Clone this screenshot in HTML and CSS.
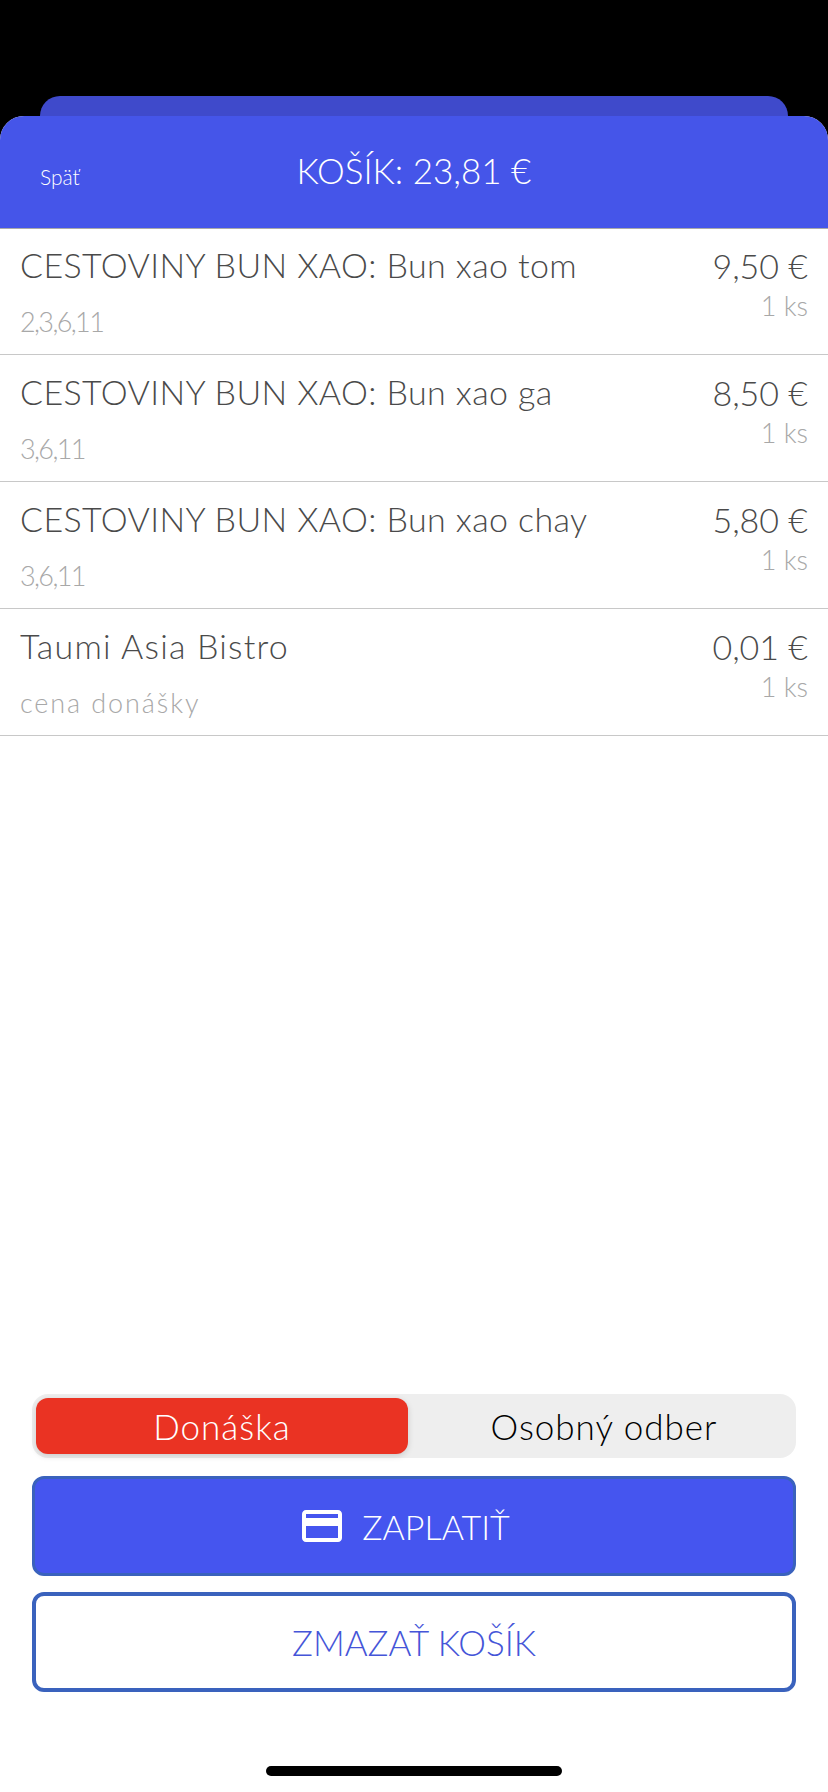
FILE: index.html
```html
<!DOCTYPE html>
<html lang="sk">
<head>
    <meta charset="UTF-8">
    <meta name="viewport" content="width=device-width, initial-scale=1.0">
    <title>Košík</title>
    <link rel="stylesheet" href="styles.css">
</head>
<body>
    <div class="back-sheet"></div>
    <div class="sheet">
        <header class="top">
            <a class="back">Späť</a>
            <h1>KOŠÍK: 23,81 €</h1>
        </header>

        <ul class="items">
            <li class="item">
                <div class="item-main">
                    <div class="item-name">CESTOVINY BUN XAO: Bun xao tom</div>
                    <div class="item-note codes">2,3,6,11</div>
                </div>
                <div class="item-side">
                    <div class="item-price">9,50 €</div>
                    <div class="item-qty">1 ks</div>
                </div>
            </li>
            <li class="item">
                <div class="item-main">
                    <div class="item-name">CESTOVINY BUN XAO: Bun xao ga</div>
                    <div class="item-note codes">3,6,11</div>
                </div>
                <div class="item-side">
                    <div class="item-price">8,50 €</div>
                    <div class="item-qty">1 ks</div>
                </div>
            </li>
            <li class="item">
                <div class="item-main">
                    <div class="item-name">CESTOVINY BUN XAO: Bun xao chay</div>
                    <div class="item-note codes">3,6,11</div>
                </div>
                <div class="item-side">
                    <div class="item-price">5,80 €</div>
                    <div class="item-qty">1 ks</div>
                </div>
            </li>
            <li class="item">
                <div class="item-main">
                    <div class="item-name wide">Taumi Asia Bistro</div>
                    <div class="item-note words">cena donášky</div>
                </div>
                <div class="item-side">
                    <div class="item-price">0,01 €</div>
                    <div class="item-qty">1 ks</div>
                </div>
            </li>
        </ul>

        <div class="actions">
            <div class="switch">
                <div class="switch-opt active">Donáška</div>
                <div class="switch-opt">Osobný odber</div>
            </div>
            <button class="btn btn-pay">
                <svg class="card-icon" width="40" height="32" viewBox="2 4 20 16">
                    <path fill="#fff" d="M20 4H4c-1.11 0-1.99.89-1.99 2L2 18c0 1.11.89 2 2 2h16c1.11 0 2-.89 2-2V6c0-1.11-.89-2-2-2zm0 14H4v-6h16v6zm0-10H4V6h16v2z"/>
                </svg>
                ZAPLATIŤ
            </button>
            <button class="btn btn-clear">ZMAZAŤ KOŠÍK</button>
        </div>

        <div class="home-bar"></div>
    </div>
</body>
</html>
```

FILE: styles.css
```css
* {
    box-sizing: border-box;
}
body {
    margin: 0;
    height: 1792px;
    background: #000;
    font-family: Lato, "Noto Sans", sans-serif;
    font-weight: 300;
    overflow: hidden;
}
.back-sheet {
    height: 20px;
    margin: 96px 40px 0;
    background: #3f4acb;
    border-radius: 20px 20px 0 0;
}
.sheet {
    height: 1676px;
    display: flex;
    flex-direction: column;
    background: #fff;
    border-radius: 24px 24px 0 0;
}
.top {
    position: relative;
    height: 113px;
    flex: none;
    background: #4555e9;
    border-radius: 24px 24px 0 0;
    border-bottom: 1px solid #a9a9a9;
    color: #fff;
    text-align: center;
}
.top h1 {
    margin: 0;
    padding-top: 32px;
    font-size: 35px;
    font-weight: 300;
    line-height: 45px;
}
.back {
    position: absolute;
    left: 40px;
    top: 48px;
    font-size: 21px;
    line-height: 26px;
}
.items {
    list-style: none;
    margin: 0;
    padding: 0;
}
.item {
    display: flex;
    justify-content: space-between;
    height: 127px;
    padding: 15px 20px 0;
    border-bottom: 1px solid #c8c8c8;
}
.item:first-child {
    height: 126px;
    padding-top: 14px;
}
.item-name,
.item-price {
    font-size: 34px;
    line-height: 44px;
    color: #4a4a4a;
}
.item-name {
    letter-spacing: 0.4px;
}
.item-name.wide {
    letter-spacing: 1.2px;
}
.item-note {
    margin-top: 18px;
    font-size: 27px;
    line-height: 34px;
    color: #a8a8a8;
}
.item-note.codes {
    letter-spacing: -1.6px;
}
.item-note.words {
    letter-spacing: 1.9px;
}
.item-side {
    padding-top: 1px;
    text-align: right;
}
.item-qty {
    margin-top: 1px;
    font-size: 27px;
    line-height: 34px;
    color: #a8a8a8;
}
.actions {
    display: flex;
    flex-direction: column;
    margin-top: auto;
    padding: 0 32px;
}
.switch {
    display: flex;
    height: 64px;
    padding: 4px;
    background: #eee;
    border-radius: 16px;
}
.switch-opt {
    flex: 1;
    padding-left: 8px;
    font-size: 35px;
    letter-spacing: 1px;
    line-height: 56px;
    text-align: center;
    color: #000;
}
.switch-opt.active {
    flex: none;
    width: 372px;
    padding-left: 0;
    background: #ea3323;
    border-radius: 12px;
    color: #fff;
    box-shadow: 0 2px 6px rgba(0,0,0,0.15);
}
.btn {
    display: flex;
    align-items: center;
    justify-content: center;
    height: 100px;
    border-radius: 12px;
    font-family: inherit;
    font-weight: 300;
    font-size: 35px;
}
.btn-pay {
    margin-top: 18px;
    padding-right: 22px;
    background: #4555ef;
    border: 3px solid #3a62bd;
    color: #fff;
    font-size: 34px;
}
.card-icon {
    margin-right: 20px;
}
.btn-clear {
    margin-top: 16px;
    background: #fff;
    border: 4px solid #3a62bd;
    color: #4555d8;
}
.home-bar {
    flex: none;
    width: 296px;
    height: 10px;
    margin: 74px auto 16px;
    background: #000;
    border-radius: 5px;
}
```
